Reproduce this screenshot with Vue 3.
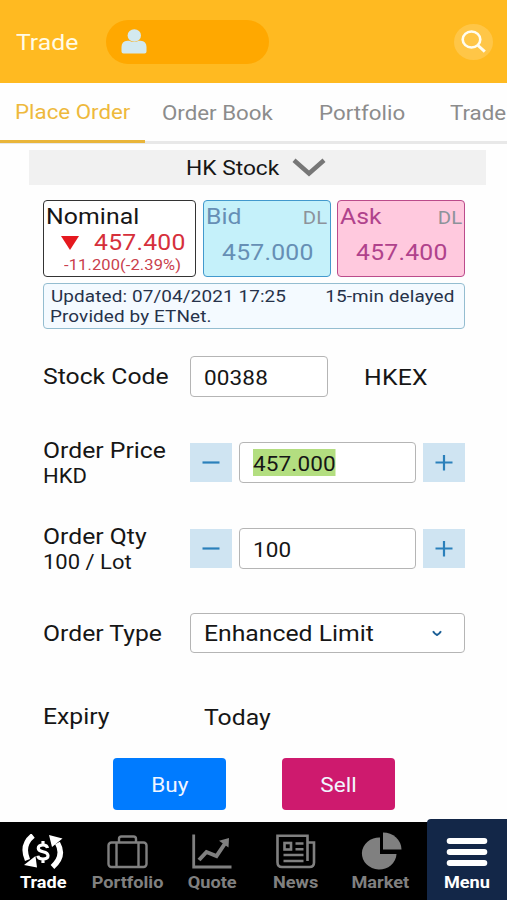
<script setup>
import { ref } from 'vue'

const tabs = ['Place Order', 'Order Book', 'Portfolio', 'Trade']
const activeTab = ref('Place Order')
</script>

<template>
  <div class="screen">
    <header class="topbar">
      <h1 class="title"><span class="w">Trade</span></h1>
      <div class="account">
        <svg width="28" height="28" viewBox="0 0 28 28">
          <path d="M1.500 23.500V19q0-6 6-6.300h1.800q4.700 2.400 9.400 0h1.800q6 .3 6 6.300v4.500q0 2-2 2h-21q-2 0-2-2z" fill="#d3e9ef" />
          <ellipse cx="14.300" cy="7.500" rx="6.700" ry="6.200" fill="#d3e9ef" />
        </svg>
      </div>
      <button class="search" aria-label="Search">
        <svg width="40" height="38" viewBox="0 0 40 38" fill="none" stroke="#fffdf0">
          <ellipse cx="17.500" cy="16.500" rx="8.800" ry="8" stroke-width="2.600" />
          <path d="M23.500 22l7.300 6.700" stroke-width="3" />
        </svg>
      </button>
    </header>

    <nav class="tabs">
      <button
        v-for="t in tabs"
        :key="t"
        class="tab"
        :class="{ active: t === activeTab }"
        @click="activeTab = t"
      ><span class="w">{{ t }}</span></button>
    </nav>

    <div class="market">
      <span class="w">HK Stock</span>
      <svg width="34" height="20" viewBox="0 0 34 20" fill="none" stroke="#777" stroke-width="4.500">
        <path d="M2 2.300L17 15.500L32 2.300" />
      </svg>
    </div>

    <main class="content">
      <section class="quotes">
        <div class="quote nominal">
          <div class="q-name"><span class="w">Nominal</span></div>
          <div class="q-row">
            <svg width="18" height="14" viewBox="0 0 18 14"><path d="M0 0h18L9 14z" fill="#e5191f" /></svg>
            <span class="q-price w">457.400</span>
          </div>
          <div class="change"><span class="w">-11.200(-2.39%)</span></div>
        </div>
        <div class="quote bid">
          <div class="q-head"><span class="q-name w">Bid</span><span class="dl w right">DL</span></div>
          <div class="q-price"><span class="w">457.000</span></div>
        </div>
        <div class="quote ask">
          <div class="q-head"><span class="q-name w">Ask</span><span class="dl w right">DL</span></div>
          <div class="q-price"><span class="w">457.400</span></div>
        </div>
      </section>

      <section class="info">
        <div class="info-row"><span class="w">Updated: 07/04/2021 17:25</span><span class="w right">15-min delayed</span></div>
        <div class="provider"><span class="w">Provided by ETNet.</span></div>
      </section>

      <section class="row stock">
        <label class="label"><span class="w">Stock Code</span></label>
        <div class="field code"><span class="num w">00388</span></div>
        <span class="hkex"><span class="w">HKEX</span></span>
      </section>

      <section class="row price">
        <label class="label"><span class="w">Order Price</span><small><span class="w">HKD</span></small></label>
        <button class="step"><svg width="18" height="18" viewBox="0 0 18 18"><path d="M.5 8.500h17" /></svg></button>
        <div class="field amount"><span class="num selected w">457.000</span></div>
        <button class="step"><svg width="18" height="18" viewBox="0 0 18 18"><path d="M.5 8.500h17M9 1v15.400" /></svg></button>
      </section>

      <section class="row qty">
        <label class="label"><span class="w">Order Qty</span><small><span class="w">100 / Lot</span></small></label>
        <button class="step"><svg width="18" height="18" viewBox="0 0 18 18"><path d="M.5 8.500h17" /></svg></button>
        <div class="field amount"><span class="num w">100</span></div>
        <button class="step"><svg width="18" height="18" viewBox="0 0 18 18"><path d="M.5 8.500h17M9 1v15.400" /></svg></button>
      </section>

      <section class="row type">
        <label class="label"><span class="w">Order Type</span></label>
        <div class="field select">
          <span class="w">Enhanced Limit</span>
          <svg width="10" height="7" viewBox="0 0 10 7" fill="none" stroke="#1b5f96" stroke-width="2"><path d="M1 1.200Q3 4.300 5 5Q7 4.300 9 1.200" /></svg>
        </div>
      </section>

      <section class="row expiry">
        <label class="label"><span class="w">Expiry</span></label>
        <span class="today"><span class="w">Today</span></span>
      </section>

      <section class="actions">
        <button class="btn buy"><span class="w mid">Buy</span></button>
        <button class="btn sell"><span class="w mid">Sell</span></button>
      </section>
    </main>

    <footer class="bottom">
      <a class="item on">
        <svg width="42" height="36" viewBox="0 0 42 36">
          <path d="M11 1.500Q-1 11 5.500 26M30.500 33Q43 22 35.500 9" fill="none" stroke="#fff" stroke-width="5.500" />
          <path d="M2 31L15 33.500L13.500 22zM27 1L40.500 4.500L30 13z" fill="#fff" />
          <path d="M25.500 14Q25 11 21 11Q16.300 11 16.300 14.200Q16.300 16.700 21 17.700Q26 18.700 26 21.800Q26 25 21 25Q16.300 25 15.800 21.800M21 7v4M21 25v4" fill="none" stroke="#fff" stroke-width="3.200" />
        </svg>
        <span class="w mid">Trade</span>
      </a>
      <a class="item">
        <svg width="42" height="36" viewBox="0 0 42 36" fill="none" stroke="#808080" stroke-width="2.400">
          <rect x="1.500" y="8.500" width="38" height="24.500" rx="3" />
          <path d="M9.500 8.500v24.500M31.500 8.500v24.500M12 8.500V5q0-2.500 2.500-2.500h12q2.500 0 2.500 2.500V8.500" />
        </svg>
        <span class="w mid">Portfolio</span>
      </a>
      <a class="item">
        <svg width="42" height="36" viewBox="0 0 42 36" fill="none" stroke="#808080">
          <path d="M2.700 .5V33H40.500" stroke-width="2.800" />
          <path d="M8 26L15.500 18L25.500 22L35 8" stroke-width="4" />
          <path d="M28 6.700L38 4L37.500 13.500z" fill="#808080" stroke="none" />
        </svg>
        <span class="w mid">Quote</span>
      </a>
      <a class="item">
        <svg width="42" height="36" viewBox="0 0 42 36" fill="none" stroke="#808080" stroke-width="2.600">
          <path d="M32.500 27V1.700H2.500v26.500q0 4.800 4.500 4.800h27.500q4.500 0 4.500-4.500V8.500H32.500M32.500 20v7" />
          <rect x="9.500" y="9" width="6.500" height="6.500" />
          <path d="M20.500 9.500h8M20.500 15.200h8M8.500 21h20M8.500 27h20" stroke-width="2.400" />
        </svg>
        <span class="w mid">News</span>
      </a>
      <a class="item">
        <svg width="42" height="38" viewBox="0 0 42 38" fill="#808080">
          <path d="M20 5.500V22H36.500A17.300 16 0 1 1 20 5.500z" />
          <path d="M23 .5V17.500H41.500A18.500 17 0 0 0 23 .5z" />
        </svg>
        <span class="w mid">Market</span>
      </a>
      <a class="item on menu">
        <svg width="42" height="32" viewBox="0 0 42 32" stroke="#fff" stroke-width="6" stroke-linecap="round">
          <path d="M3.700 5h34.600M3.700 16h34.600M3.700 27h34.600" />
        </svg>
        <span class="w mid">Menu</span>
      </a>
    </footer>
  </div>
</template>

<style>
body { background: #fff; }
</style>

<style scoped>
* { box-sizing: border-box; }
.screen {
  width: 507px; height: 900px; overflow: hidden;
  display: flex; flex-direction: column;
  background: #fefefe; color: #161616;
  font-family: Roboto, "Liberation Sans", sans-serif;
  white-space: nowrap;
}
button { border: 0; padding: 0; background: none; font: inherit; color: inherit; letter-spacing: inherit; }
svg { display: block; flex: none; }

/* extended-width text */
.w { display: inline-block; transform: scaleX(1.1); transform-origin: left center; }
.w.right { transform-origin: right center; }
.w.mid { transform-origin: center; }

.topbar { height: 83px; background: #ffba21; display: flex; align-items: center; flex: none; padding: 1px 14px 0 16px; }
.title { margin: 0; width: 90px; font-size: 22.500px; font-weight: 400; color: #fffbe6; line-height: 28px; padding-bottom: 1px; }
.account { width: 163px; height: 44px; border-radius: 22px; background: #ffa800; padding: 8px 14px; }
.search { margin-left: auto; width: 39px; height: 36px; border-radius: 50%; background: #ffc647; display: flex; align-items: center; justify-content: center; }

.tabs { height: 61px; flex: none; display: flex; border-bottom: 3px solid #e8e8e8; }
.tab { height: 61px; font-size: 20.300px; color: #8c8c8c; padding: 0 0 2px 16px; text-align: left; flex: none; }
.tab:nth-child(1) { width: 145px; padding-left: 15px; }
.tab:nth-child(2) { width: 157px; padding-left: 17px; }
.tab:nth-child(3) { width: 131px; padding-left: 17px; }
.tab:nth-child(4) { padding-left: 17px; }
.tab.active { color: #eeb93c; border-bottom: 3px solid #e9b53a; padding-top: 2px; height: 60px; }

.market { margin: 6px 21px 0 29px; height: 35px; flex: none; background: #f1f1f1; display: flex; align-items: center; padding-left: 157px; gap: 21px; font-size: 20.700px; }

.content { padding: 15px 42px 0 43px; flex: 1; }
.quotes { display: grid; grid-template-columns: 153px 128px 128px; column-gap: 6.500px; height: 77px; }
.quote { border: 1.500px solid; border-radius: 4px; height: 77px; padding: 1px 2px 0; }
.q-name { font-size: 22.500px; line-height: 29px; color: inherit; }
.nominal .q-name { height: 28px; letter-spacing: .1px; }
.q-price { font-size: 22.500px; line-height: 26px; letter-spacing: .2px; }
.nominal { border-color: #333; background: #fff; }
.nominal .q-row { display: flex; align-items: center; padding-left: 15px; gap: 15px; height: 26px; color: #d6303b; }
.nominal .q-row .q-price { padding-bottom: 1px; line-height: 25px; }
.change { font-size: 15px; line-height: 19px; color: #c9404c; padding-left: 18px; letter-spacing: .1px; }
.bid { background: #c5f1fa; border-color: #4299cd; color: #668fb5; }
.ask { background: #ffc9de; border-color: #bb4b8b; color: #b0428c; }
.q-head { display: flex; justify-content: space-between; height: 29px; }
.dl { font-size: 18.500px; line-height: 33px; color: #8d929a; }
.bid .q-price, .ask .q-price { padding: 8px 0 0 16px; }
.info { margin-top: 6px; height: 46px; border: 1.500px solid #94bdd0; border-radius: 4px; background: #f4faff; color: #26324a; padding: 2px 9px 0 6px; font-size: 17.200px; line-height: 20px; letter-spacing: .1px; }
.info-row { display: flex; justify-content: space-between; padding-left: 1px; }

.row { display: flex; align-items: center; }
.label { width: 146.500px; flex: none; font-size: 22.500px; line-height: 27px; }
.label small { display: block; font-size: 20px; line-height: 24px; }
.field { border: 1.500px solid #b5b5b5; border-radius: 4px; background: #fff; height: 41px; display: flex; align-items: center; padding-left: 13px; }
.num { font-size: 20.500px; line-height: 24px; padding-top: 3px; letter-spacing: .1px; }
.stock { margin-top: 27px; height: 41px; font-size: 22.500px; }
.code { width: 138px; }
.hkex { margin-left: 36px; letter-spacing: .2px; }
.price { margin-top: 45px; height: 41px; }
.qty { margin-top: 45px; height: 41px; }
.step { width: 42.500px; height: 39px; background: #cfe4f2; display: flex; align-items: center; justify-content: center; }
.step path { stroke: #2b80bb; stroke-width: 2.200; fill: none; }
.amount { width: 177px; margin: 0 7px; }
.selected { background: #b3de80; }
.type { margin-top: 44px; height: 40px; }
.select { width: 275.500px; height: 40px; justify-content: space-between; padding-right: 22px; font-size: 22.500px; }
.expiry { margin-top: 50px; height: 27px; font-size: 22.500px; }
.today { padding-left: 14.500px; }
.actions { display: flex; gap: 56px; padding-left: 70px; margin-top: 28px; }
.btn { width: 113px; height: 52px; border-radius: 4px; color: #f1f5ff; font-size: 20.500px; padding-top: 2px; }
.buy { background: #007bff; }
.sell { background: #ce1a6e; }

.bottom { height: 78px; flex: none; background: #000; display: grid; grid-template-columns: 86px 84px 84px 84px 85px 4px 80px; grid-template-rows: 78px; align-items: end; }
.item { height: 78px; display: flex; flex-direction: column; align-items: center; justify-content: flex-end; color: #808080; font-size: 16.500px; font-weight: 700; padding-bottom: 7px; gap: 3px; line-height: 20px; }
.item.on { color: #fff; }
.menu { grid-column: 7; height: 81px; background: #132748; border-top-left-radius: 4px; }
.menu svg { margin-bottom: 2px; }
</style>
